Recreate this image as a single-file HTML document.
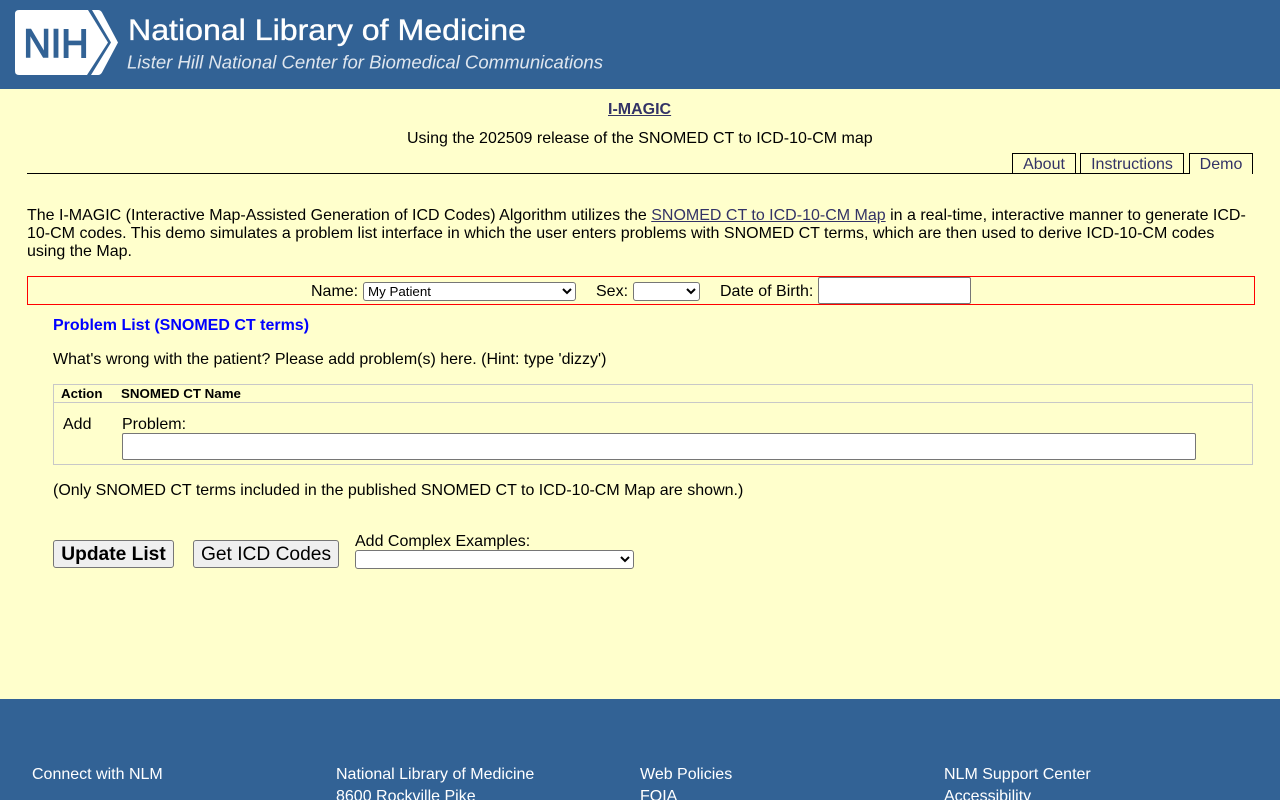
<!DOCTYPE html>
<html lang="en">
<head>
<meta charset="utf-8">
<title>I-MAGIC</title>
<style>
html,body{margin:0;padding:0;}
body{width:1280px;height:800px;overflow:hidden;position:relative;background:#ffffcc;font:16px/18px "Liberation Sans",Arial,sans-serif;color:#000;}
.a{position:absolute;white-space:nowrap;}
a{color:#333366;}
.tab{position:absolute;top:153px;height:21px;box-sizing:border-box;border:1px solid #000;border-bottom:0;text-align:center;line-height:21px;color:#333366;}
select{font:13.33px "Liberation Sans",Arial,sans-serif;background:#fff;color:#000;border:1px solid #767676;border-radius:3px;box-sizing:border-box;margin:0;padding:0;}
input{box-sizing:border-box;background:#fff;border:1px solid #767676;border-radius:2px;margin:0;padding:0;}
button{font:19.2px "Liberation Sans",Arial,sans-serif;background:#efefef;color:#000;border:1px solid #767676;border-radius:3px;box-sizing:border-box;margin:0;padding:2px 0 0;}
</style>
</head>
<body>
<svg class="a" style="left:0;top:0" width="1280" height="89" viewBox="0 0 1280 89">
<rect width="1280" height="89" fill="#326295"/>
<path d="M19 10H88L108 42.500L87 75H19Q15 75 15 71V14Q15 10 19 10Z" fill="#fff"/>
<path d="M92 10H98Q100.500 10 102 12.500L118 42.500L102 72.500Q100.500 75 98 75H91L111 42.500Z" fill="#fff"/>
<text x="23.500" y="56.800" font-family="Liberation Sans" font-size="40" fill="#326295" stroke="#326295" stroke-width="1.400" textLength="65" lengthAdjust="spacingAndGlyphs">NIH</text>
<text x="128" y="40" font-family="Liberation Sans" font-size="30" fill="#fff" stroke="#fff" stroke-width=".35" textLength="398" lengthAdjust="spacingAndGlyphs">National Library of Medicine</text>
<text x="127" y="68.500" font-family="Liberation Sans" font-style="italic" font-size="18" fill="#dfe6ee" textLength="476" lengthAdjust="spacingAndGlyphs">Lister Hill National Center for Biomedical Communications</text>
</svg>

<a class="a" href="#" style="left:608px;top:101px;font-weight:bold;">I-MAGIC</a>
<div class="a" style="left:407px;top:130px;">Using the 202509 release of the SNOMED CT to ICD-10-CM map</div>

<div class="a" style="left:27px;top:173px;width:1162px;height:1px;background:#000;"></div>
<div class="tab" style="left:1012px;width:64px;">About</div>
<div class="tab" style="left:1080px;width:104px;">Instructions</div>
<div class="tab" style="left:1189px;width:64px;background:#ffffcc;">Demo</div>

<div class="a" style="left:27px;top:207px;">The I-MAGIC (Interactive Map-Assisted Generation of ICD Codes) Algorithm utilizes the <a href="#">SNOMED CT to ICD-10-CM Map</a> in a real-time, interactive manner to generate ICD-</div>
<div class="a" style="left:27px;top:225px;">10-CM codes. This demo simulates a problem list interface in which the user enters problems with SNOMED CT terms, which are then used to derive ICD-10-CM codes</div>
<div class="a" style="left:27px;top:243px;">using the Map.</div>

<div class="a" style="left:27px;top:276px;width:1228px;height:29px;box-sizing:border-box;border:1px solid #ff0000;"></div>
<div class="a" style="left:311px;top:283px;">Name:</div>
<select class="a" style="left:363px;top:282px;width:213px;height:19px;"><option>My Patient</option></select>
<div class="a" style="left:596px;top:283px;">Sex:</div>
<select class="a" style="left:633px;top:282px;width:67px;height:19px;"><option></option></select>
<div class="a" style="left:720px;top:283px;">Date of Birth:</div>
<input class="a" type="text" style="left:818px;top:277px;width:153px;height:27px;">

<div class="a" style="left:53px;top:317px;font-weight:bold;color:#0000ff;">Problem List (SNOMED CT terms)</div>
<div class="a" style="left:53px;top:351px;">What's wrong with the patient? Please add problem(s) here. (Hint: type 'dizzy')</div>

<div class="a" style="left:53px;top:384px;width:1200px;height:81px;box-sizing:border-box;border:1px solid #c8c8c8;"></div>
<div class="a" style="left:53px;top:402px;width:1200px;height:1px;background:#c8c8c8;"></div>
<div class="a" style="left:61px;top:385px;font-size:13.33px;font-weight:bold;">Action</div>
<div class="a" style="left:121px;top:385px;font-size:13.33px;font-weight:bold;">SNOMED CT Name</div>
<div class="a" style="left:63px;top:416px;">Add</div>
<div class="a" style="left:122px;top:416px;">Problem:</div>
<input class="a" type="text" style="left:122px;top:433px;width:1074px;height:27px;">

<div class="a" style="left:53px;top:482px;">(Only SNOMED CT terms included in the published SNOMED CT to ICD-10-CM Map are shown.)</div>

<button class="a" style="left:53px;top:540px;width:121px;height:28px;font-weight:bold;">Update List</button>
<button class="a" style="left:193px;top:540px;width:146px;height:28px;">Get ICD Codes</button>
<div class="a" style="left:355px;top:533px;">Add Complex Examples:</div>
<select class="a" style="left:355px;top:550px;width:279px;height:19px;"><option></option></select>

<div class="a" style="left:0;top:699px;width:1280px;height:101px;background:#326295;overflow:hidden;color:#fff;line-height:22px;">
  <div class="a" style="left:32px;top:65px;">Connect with NLM</div>
  <div class="a" style="left:336px;top:65px;">National Library of Medicine<br>8600 Rockville Pike</div>
  <div class="a" style="left:640px;top:65px;">Web Policies<br>FOIA</div>
  <div class="a" style="left:944px;top:65px;">NLM Support Center<br>Accessibility</div>
</div>
</body>
</html>
